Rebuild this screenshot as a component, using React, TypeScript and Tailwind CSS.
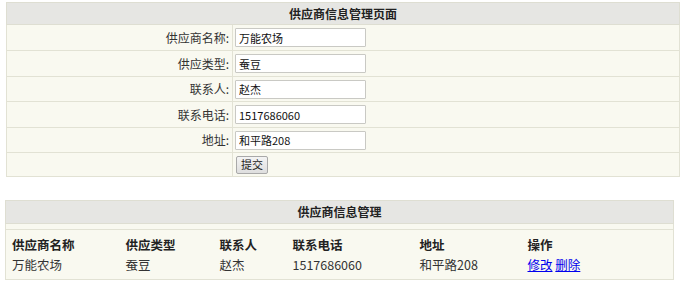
import React from "react";

const fields = [
  { label: "供应商名称:", value: "万能农场", h: "h-[26px]" },
  { label: "供应类型:", value: "蚕豆", h: "h-[26px]" },
  { label: "联系人:", value: "赵杰", h: "h-[25px]" },
  { label: "联系电话:", value: "1517686060", h: "h-[26px]" },
  { label: "地址:", value: "和平路208", h: "h-[25px]" },
];

const font = { fontFamily: '"Noto Sans CJK SC", "Noto Sans", sans-serif' };

export default function App() {
  return (
    <div className="w-[691px] h-[294px] bg-white text-[12px] text-[#333]" style={font}>
      <div className="pt-[2px] pl-[6px]">
        <table className="w-[674px] border-collapse table-fixed">
          <colgroup>
            <col className="w-[226px]" />
            <col />
          </colgroup>
          <thead>
            <tr className="h-[22px] bg-[#e6e6e3]">
              <th colSpan={2} className="border border-[#deded2] text-center font-bold text-[12px] text-[#222] leading-none">
                供应商信息管理页面
              </th>
            </tr>
          </thead>
          <tbody>
            {fields.map((f) => (
              <tr key={f.label} className={`${f.h} bg-[#f9f9f0]`}>
                <td className="border border-[#e2e2d4] text-right pr-[3px] leading-none">{f.label}</td>
                <td className="border border-[#e2e2d4] pl-[2px] py-0">
                  <input
                    readOnly
                    value={f.value}
                    className="block w-[131px] h-[19px] bg-white border border-[#c9c9c4] rounded-[1px] px-[3px] text-[11px] text-[#111] outline-none"
                    style={font}
                  />
                </td>
              </tr>
            ))}
            <tr className="h-[24px] bg-[#f9f9f0]">
              <td className="border border-[#e2e2d4]" />
              <td className="border border-[#e2e2d4] pl-[3px]">
                <button
                  className="block w-[32px] h-[18px] bg-gradient-to-b from-[#f4f4f4] to-[#dedede] border border-[#a9a9a9] rounded-[2px] text-[11px] text-[#222] leading-none"
                  style={font}
                >
                  提交
                </button>
              </td>
            </tr>
          </tbody>
        </table>
      </div>

      <div className="pt-[23px] pl-[5px]">
        <table className="w-[669px] border-collapse table-fixed">
          <colgroup>
            <col className="w-[114px]" />
            <col className="w-[94px]" />
            <col className="w-[73px]" />
            <col className="w-[127px]" />
            <col className="w-[108px]" />
            <col />
          </colgroup>
          <thead>
            <tr className="h-[23px] bg-[#e6e6e3]">
              <th colSpan={6} className="border border-[#deded2] text-center font-bold text-[12px] text-[#222] leading-none">
                供应商信息管理
              </th>
            </tr>
          </thead>
          <tbody className="bg-[#f9f9f0]">
            <tr className="h-[6px]">
              <td colSpan={6} className="border border-[#e2e2d4] p-0" />
            </tr>
            <tr className="h-[26px] font-bold text-[#222]">
              {["供应商名称", "供应类型", "联系人", "联系电话", "地址", "操作"].map((h, i) => (
                <td
                  key={h}
                  className={`pl-[6px] pt-[4px] text-[12.5px] leading-none ${i === 0 ? "border-l border-[#e2e2d4]" : ""} ${i === 5 ? "border-r border-[#e2e2d4]" : ""}`}
                >
                  {h}
                </td>
              ))}
            </tr>
            <tr className="h-[24px] text-[#333] text-[12.5px]">
              <td className="pl-[6px] pb-[4px] leading-none border-l border-b border-[#e2e2d4]">万能农场</td>
              <td className="pl-[6px] pb-[4px] leading-none border-b border-[#e2e2d4]">蚕豆</td>
              <td className="pl-[6px] pb-[4px] leading-none border-b border-[#e2e2d4]">赵杰</td>
              <td className="pl-[6px] pb-[4px] leading-none border-b border-[#e2e2d4]">1517686060</td>
              <td className="pl-[6px] pb-[4px] leading-none border-b border-[#e2e2d4]">和平路208</td>
              <td className="pl-[6px] pb-[4px] leading-none border-r border-b border-[#e2e2d4]">
                <a href="#" className="text-[#0000ee] underline">修改</a>{" "}
                <a href="#" className="text-[#0000ee] underline">删除</a>
              </td>
            </tr>
          </tbody>
        </table>
      </div>
    </div>
  );
}
